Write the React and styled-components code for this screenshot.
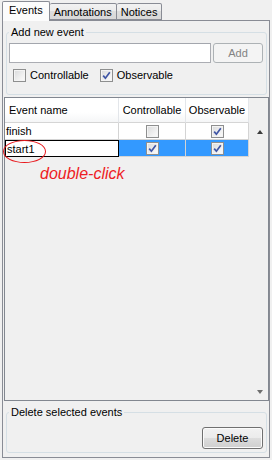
import React from "react";
import styled, { createGlobalStyle } from "styled-components";

const GlobalStyle = createGlobalStyle`
  body {
    margin: 0;
    background: #f0f0f0;
    font-family: "Liberation Sans", Arial, sans-serif;
    font-size: 11px;
    color: #000;
  }
  * { box-sizing: border-box; }
`;

const columns = ["Event name", "Controllable", "Observable"];

const events = [
  { name: "finish", controllable: false, observable: true },
  { name: "start1", controllable: true, observable: true, editing: true },
];

function Check({ checked }) {
  return (
    <Box>
      {checked && (
        <svg width="11" height="11" viewBox="0 0 11 11">
          <path
            d="M2.2 5.6 L4.4 8.2 L8.8 2.2"
            fill="none"
            stroke="#3f55a5"
            strokeWidth="1.7"
          />
        </svg>
      )}
    </Box>
  );
}

export default function App() {
  return (
    <Window>
      <GlobalStyle />
      <TabBar>
        <Tab $active>Events</Tab>
        <Tab>Annotations</Tab>
        <Tab>Notices</Tab>
      </TabBar>

      <Panel>
        <Group>
          <Legend>Add new event</Legend>
          <InputRow>
            <TextField type="text" />
            <Button disabled $w={50}>Add</Button>
          </InputRow>
          <CheckRow>
            <CheckLabel>
              <Check checked={false} />
              Controllable
            </CheckLabel>
            <CheckLabel>
              <Check checked />
              Observable
            </CheckLabel>
          </CheckRow>
        </Group>

        <Table>
          <Grid>
            {columns.map((c, i) => (
              <HeadCell key={c} $center={i > 0}>
                {c}
              </HeadCell>
            ))}
            {events.map((ev) => (
              <React.Fragment key={ev.name}>
                {ev.editing ? (
                  <EditCell>{ev.name}</EditCell>
                ) : (
                  <Cell>{ev.name}</Cell>
                )}
                <Cell $center $selected={ev.editing}>
                  <Check checked={ev.controllable} />
                </Cell>
                <Cell $center $selected={ev.editing}>
                  <Check checked={ev.observable} />
                </Cell>
              </React.Fragment>
            ))}
          </Grid>
          <ScrollBar>
            <Arrow $up />
            <Arrow />
          </ScrollBar>
        </Table>

        <Group $bottom>
          <Legend>Delete selected events</Legend>
          <ButtonRow>
            <Button $w={61}>Delete</Button>
          </ButtonRow>
        </Group>
      </Panel>

      <Ellipse />
      <Hint>double-click</Hint>
    </Window>
  );
}

const Window = styled.div`
  position: relative;
  width: 272px;
  height: 460px;
  display: flex;
  flex-direction: column;
  padding: 0 2px 2px 2px;
  overflow: hidden;
`;

const TabBar = styled.div`
  height: 20px;
  display: flex;
  align-items: flex-end;
`;

const Tab = styled.div`
  position: relative;
  z-index: 1;
  height: ${(p) => (p.$active ? "20px" : "17px")};
  margin-bottom: ${(p) => (p.$active ? "-1px" : "0")};
  padding: ${(p) => (p.$active ? "2px 6px 0 6px" : "2px 4px 0 4px")};
  border: 1px solid #898c95;
  border-bottom: ${(p) => (p.$active ? "none" : "1px solid #898c95")};
  border-left: ${(p) => (p.$active ? "1px solid #898c95" : "none")};
  border-radius: 2px 2px 0 0;
  background: ${(p) =>
    p.$active
      ? "#fcfcfc"
      : "linear-gradient(#f2f2f2 0%, #ebebeb 50%, #dddddd 50%, #d8d8d8 100%)"};
  line-height: 13px;
  white-space: nowrap;
  &:first-child {
    border-left: 1px solid #898c95;
  }
`;

const Panel = styled.div`
  flex: 1;
  display: flex;
  flex-direction: column;
  border: 1px solid #898c95;
  background: #f0f0f0;
  padding: 5px 0 4px 1px;
`;

const Group = styled.fieldset`
  margin: ${(p) => (p.$bottom ? "5px 2px 0 2px" : "0 2px")};
  padding: ${(p) => (p.$bottom ? "8px 3px 3px 2px" : "4px 3px 12px 2px")};
  border: 1px solid #d5dfe5;
  border-radius: 3px;
  min-width: 0;
`;

const Legend = styled.legend`
  padding: 0 2px;
  line-height: 13px;
  font-size: 11px;
`;

const InputRow = styled.div`
  display: flex;
  gap: 2px;
  height: 20px;
`;

const TextField = styled.input`
  flex: 1;
  min-width: 0;
  height: 20px;
  border: 1px solid #abadb3;
  border-top-color: #a3a6ad;
  background: #fff;
  padding: 0 3px;
  font: inherit;
`;

const Button = styled.button`
  width: ${(p) => p.$w}px;
  height: ${(p) => (p.disabled ? 20 : 22)}px;
  padding: 0;
  border-radius: 3px;
  font-family: "Liberation Sans", Arial, sans-serif;
  font-size: 11px;
  border: 1px solid ${(p) => (p.disabled ? "#adb2b5" : "#707070")};
  color: ${(p) => (p.disabled ? "#838383" : "#000")};
  background: ${(p) =>
    p.disabled
      ? "#f4f4f4"
      : "linear-gradient(#f2f2f2 0%, #ebebeb 50%, #dddddd 50%, #cfcfcf 100%)"};
  box-shadow: ${(p) => (p.disabled ? "none" : "inset 0 0 0 1px #fbfbfb")};
`;

const ButtonRow = styled.div`
  display: flex;
  justify-content: flex-end;
`;

const CheckRow = styled.div`
  display: flex;
  margin-top: 5px;
  padding-left: 4px;
  gap: 11px;
  height: 14px;
  align-items: center;
`;

const CheckLabel = styled.label`
  display: flex;
  align-items: center;
  gap: 4px;
  line-height: 13px;
`;

const Box = styled.span`
  width: 13px;
  height: 13px;
  flex: none;
  display: flex;
  align-items: center;
  justify-content: center;
  border: 1px solid #8e8f8f;
  background: linear-gradient(135deg, #d9dadb 0%, #f3f3f3 70%, #fbfbfb 100%);
  box-shadow: inset 0 0 0 1px #f4f4f4;
`;

const Table = styled.div`
  margin-top: 2px;
  height: 304px;
  display: flex;
  border: 1px solid #828790;
  background: #f0f0f0;
`;

const Grid = styled.div`
  width: 244px;
  display: grid;
  grid-template-columns: 114px 67px 63px;
  grid-template-rows: 25px 17px 17px;
  align-content: start;
`;

const HeadCell = styled.div`
  display: flex;
  align-items: center;
  justify-content: ${(p) => (p.$center ? "center" : "flex-start")};
  padding-left: ${(p) => (p.$center ? "0" : "4px")};
  background: linear-gradient(#ffffff 0%, #ffffff 60%, #f5f6f7 100%);
  border-right: 1px solid #e3e6ea;
  border-bottom: 1px solid #d5d5d5;
  white-space: nowrap;
`;

const Cell = styled.div`
  display: flex;
  align-items: center;
  justify-content: ${(p) => (p.$center ? "center" : "flex-start")};
  padding-left: ${(p) => (p.$center ? "0" : "1px")};
  background: ${(p) => (p.$selected ? "#3399ff" : "#fff")};
  border-right: 1px solid #d4d4d4;
  border-bottom: 1px solid #d4d4d4;
`;

const EditCell = styled.div`
  display: flex;
  align-items: center;
  padding-left: 1px;
  background: #fff;
  border: 1px solid #000;
`;

const ScrollBar = styled.div`
  flex: 1;
  display: flex;
  flex-direction: column;
  justify-content: space-between;
  align-items: flex-end;
  padding: 25px 0 0 0;
`;

const Arrow = styled.div`
  width: 16px;
  height: 17px;
  display: flex;
  align-items: center;
  justify-content: center;
  &::before {
    content: "";
    border-left: 3.5px solid transparent;
    border-right: 3.5px solid transparent;
    ${(p) =>
      p.$up
        ? "border-bottom: 4px solid #3c3c3c;"
        : "border-top: 4px solid #6e6e6e;"}
  }
`;

const Ellipse = styled.div`
  position: absolute;
  left: 3px;
  top: 140px;
  width: 43px;
  height: 23px;
  border: 1.5px solid #e8161b;
  border-radius: 50%;
  pointer-events: none;
`;

const Hint = styled.div`
  position: absolute;
  left: 40px;
  top: 165px;
  font-family: "Liberation Sans", Arial, sans-serif;
  font-style: italic;
  font-size: 16px;
  color: #ee1c24;
  pointer-events: none;
`;
